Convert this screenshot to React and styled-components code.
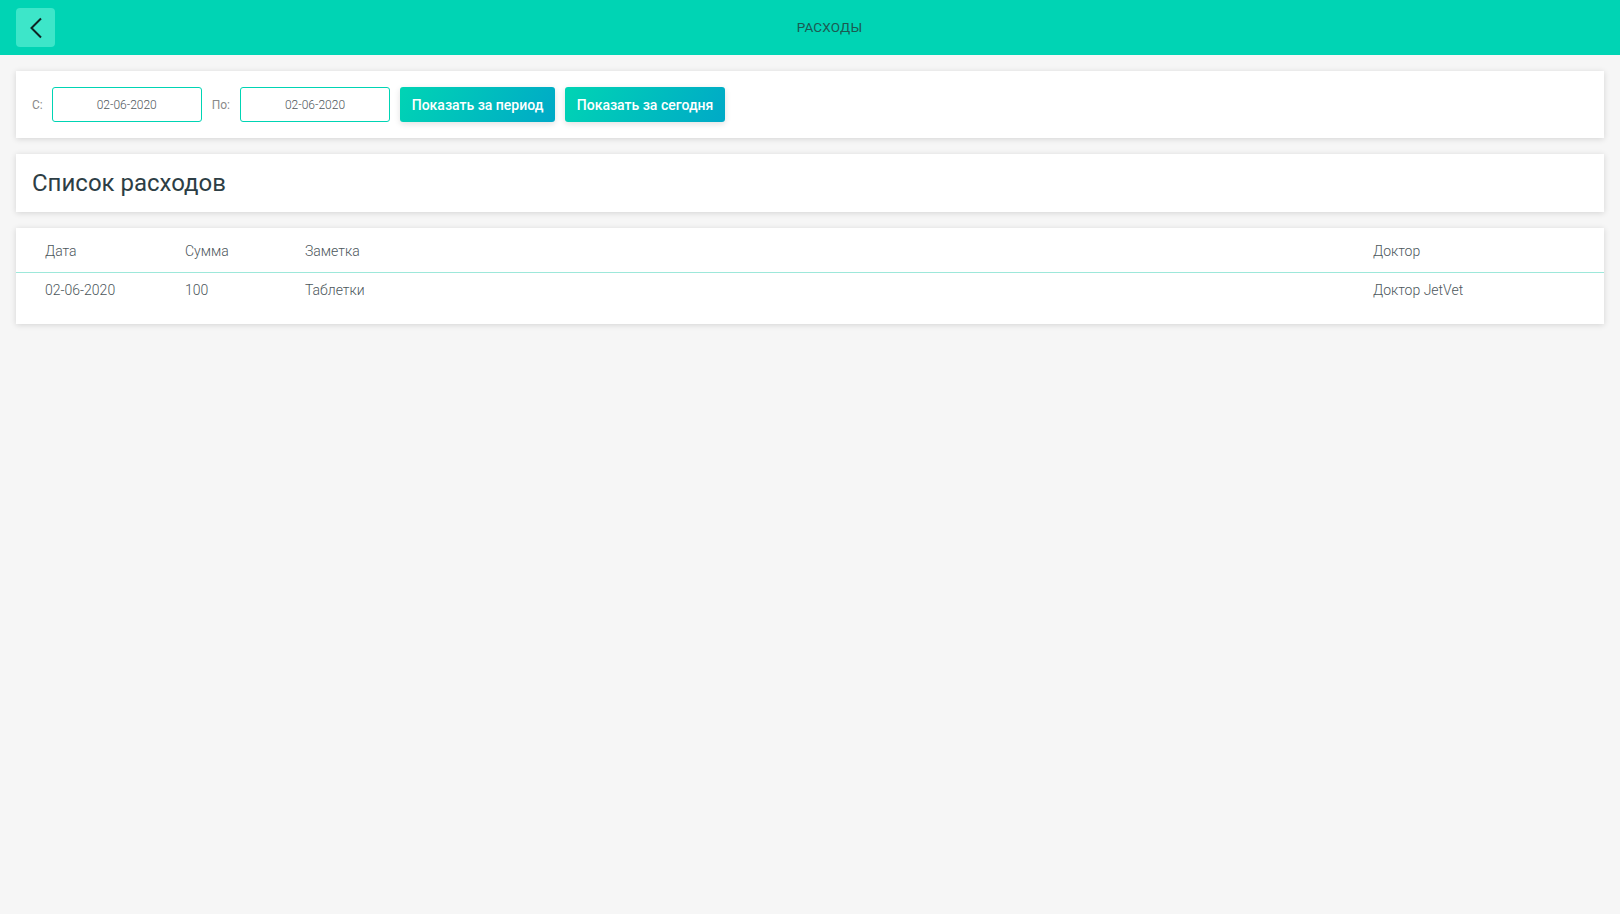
import React from 'react';
import styled, { createGlobalStyle } from 'styled-components';

const GlobalStyle = createGlobalStyle`
  html, body {
    margin: 0;
    padding: 0;
    background: #f6f6f6;
    font-family: Roboto, "Liberation Sans", sans-serif;
  }
  * {
    box-sizing: border-box;
  }
`;

const Page = styled.div`
  min-height: 914px;
  background: #f6f6f6;
`;

const TopBar = styled.header`
  height: 55px;
  background: #00d4b4;
  display: flex;
  align-items: center;
  padding: 0 16px;
`;

const BackButton = styled.button`
  width: 39px;
  height: 39px;
  border: none;
  border-radius: 4px;
  background: #3de6c9;
  display: flex;
  align-items: center;
  justify-content: center;
  padding: 0;
  cursor: pointer;
`;

const BarTitle = styled.div`
  flex: 1;
  text-align: center;
  font-size: 13.5px;
  color: #1c5a52;
  letter-spacing: 0.2px;
  padding-bottom: 2px;
`;

const Content = styled.main`
  padding: 16px;
  display: flex;
  flex-direction: column;
  gap: 16px;
`;

const Card = styled.section`
  background: #fff;
  box-shadow: 0 1px 6px rgba(0, 0, 0, 0.14);
`;

const FilterCard = styled(Card)`
  height: 67px;
  display: flex;
  align-items: center;
  padding: 0 16px;
`;

const Label = styled.span`
  font-size: 12px;
  color: #8a8a8a;
  margin-right: ${p => (p.$wide ? '10px' : '9px')};
`;

const DateInput = styled.input`
  width: 150px;
  height: 35px;
  border: 1px solid #00d4b4;
  border-radius: 3px;
  text-align: center;
  font-family: Roboto, "Liberation Sans", sans-serif;
  font-size: 12px;
  font-weight: 300;
  color: #4f575c;
  margin-right: 10px;
  outline: none;
`;

const GradientButton = styled.button`
  height: 35px;
  width: ${p => p.$w}px;
  border: none;
  border-radius: 3px;
  background: linear-gradient(120deg, #00d4b4 0%, #00a9c7 100%);
  color: #fff;
  font-family: Roboto, "Liberation Sans", sans-serif;
  font-size: 14px;
  font-weight: 500;
  box-shadow: 0 2px 6px rgba(0, 0, 0, 0.12);
  margin-right: 10px;
  cursor: pointer;
`;

const TitleCard = styled(Card)`
  height: 58px;
  display: flex;
  align-items: center;
  padding: 0 16px;
`;

const Title = styled.h2`
  margin: 0;
  font-size: 24px;
  font-weight: 400;
  color: #2d3e45;
`;

const TableCard = styled(Card)`
  padding-bottom: 17px;
`;

const Row = styled.div`
  display: grid;
  grid-template-columns: 140px 120px 1fr 231px;
  padding-left: 29px;
  padding-top: ${p => (p.$head ? '1px' : '0')};
  align-items: center;
  height: ${p => (p.$head ? '45px' : '34px')};
  border-bottom: ${p => (p.$head ? '1px solid #9de8da' : 'none')};
`;

const Cell = styled.div`
  font-size: 14px;
  font-weight: 300;
  color: #4c565b;
`;

const columns = ['Дата', 'Сумма', 'Заметка', 'Доктор'];
const rows = [['02-06-2020', '100', 'Таблетки', 'Доктор JetVet']];

const App = () => (
  <Page>
    <GlobalStyle />
    <TopBar>
      <BackButton aria-label="Назад">
        <svg width="14" height="22" viewBox="0 0 14 22">
          <path d="M12 1.5 L2.5 11 L12 20.5" fill="none" stroke="#0e2424" strokeWidth="2" />
        </svg>
      </BackButton>
      <BarTitle>РАСХОДЫ</BarTitle>
    </TopBar>
    <Content>
      <FilterCard>
        <Label>С:</Label>
        <DateInput defaultValue="02-06-2020" />
        <Label $wide>По:</Label>
        <DateInput defaultValue="02-06-2020" />
        <GradientButton $w={155}>Показать за период</GradientButton>
        <GradientButton $w={160}>Показать за сегодня</GradientButton>
      </FilterCard>
      <TitleCard>
        <Title>Список расходов</Title>
      </TitleCard>
      <TableCard>
        <Row $head>
          {columns.map(c => (
            <Cell key={c}>{c}</Cell>
          ))}
        </Row>
        {rows.map(r => (
          <Row key={r[0]}>
            {r.map((v, i) => (
              <Cell key={i}>{v}</Cell>
            ))}
          </Row>
        ))}
      </TableCard>
    </Content>
  </Page>
);

export default App;
